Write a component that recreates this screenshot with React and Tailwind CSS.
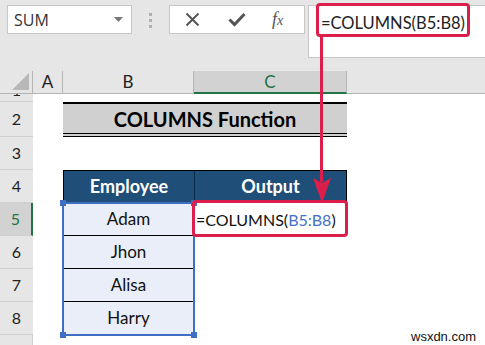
import React from "react";

const rowHead = "flex items-center justify-center bg-[#e6e6e6] border-b border-[#cfcfcf] text-[16px] text-[#222] font-['Lato',sans-serif]";

const Cell = ({ className = "", children }) => (
  <div className={`flex items-center justify-center ${className}`}>{children}</div>
);

export default function App() {
  const names = ["Adam", "Jhon", "Alisa", "Harry"];

  return (
    <div className="relative w-[485px] h-[345px] overflow-hidden bg-white font-['Lato',sans-serif]">
      {/* formula bar */}
      <div className="flex h-[71px] items-start bg-[#e6e6e6] pt-[5px]">
        <div className="ml-[7px] flex h-[29px] w-[125px] items-center justify-between border border-[#c6c6c6] bg-white pl-[6px] pr-[8px]">
          <span className="font-['Open_Sans',sans-serif] text-[16px] text-[#333]">SUM</span>
          <svg width="9" height="5" viewBox="0 0 9 5">
            <polygon points="0,0 9,0 4.5,5" fill="#777" />
          </svg>
        </div>
        <div className="ml-[17px] mt-[8px] flex flex-col gap-[3px]">
          <span className="block h-[3px] w-[3px] bg-[#b0b0b0]" />
          <span className="block h-[3px] w-[3px] bg-[#b0b0b0]" />
          <span className="block h-[3px] w-[3px] bg-[#b0b0b0]" />
        </div>
        <div className="ml-[17px] flex h-[29px] w-[136px] items-center border border-[#c6c6c6] bg-white">
          <svg className="ml-[15px]" width="15" height="15" viewBox="0 0 15 15">
            <path d="M1.5 1.5 L13.5 13.5 M13.5 1.5 L1.5 13.5" stroke="#555" strokeWidth="2" />
          </svg>
          <svg className="ml-[28px]" width="18" height="15" viewBox="0 0 18 15">
            <path d="M1.5 7.5 L6.5 12.5 L16.5 2" stroke="#555" strokeWidth="3" fill="none" />
          </svg>
          <span className="ml-[26px] font-['Liberation_Serif',serif] text-[18px] italic text-[#555]">
            f<span className="text-[14px]">x</span>
          </span>
        </div>
        <div className="ml-[3px] h-[53px] flex-1 border border-[#c6c6c6] border-r-0 bg-white pl-[12px] pt-[5px]">
          <span className="text-[16.5px] text-[#222]">=COLUMNS(B5:B8)</span>
        </div>
      </div>

      {/* sheet */}
      <div className="grid grid-cols-[33px_30px_131px_153px_1fr] grid-rows-[23px_8px_35px_33px_33px_33px_33px_33px_33px_10px]">
        {/* column headers */}
        <div className="relative border-b border-r border-[#b5b5b5] bg-[#e6e6e6]">
          <svg className="absolute bottom-[3px] right-[3px]" width="17" height="17" viewBox="0 0 17 17">
            <polygon points="17,0 17,17 0,17" fill="#b8b8b8" />
          </svg>
        </div>
        <Cell className="border-b border-r border-[#b5b5b5] bg-[#e6e6e6] text-[17px] text-[#222]">A</Cell>
        <Cell className="border-b border-r border-[#b5b5b5] bg-[#e6e6e6] text-[17px] text-[#222]">B</Cell>
        <Cell className="border-b-2 border-b-[#217346] border-r border-r-[#b5b5b5] bg-[#d2d2d2] text-[17px] text-[#217346]">C</Cell>
        <div className="border-b border-[#b5b5b5] bg-[#e6e6e6]" />

        {/* row 1 */}
        <div className="overflow-hidden bg-[#e6e6e6] border-b border-[#cfcfcf] text-center text-[16px] leading-[16px] text-[#222]">
          <div className="-mt-[12px]">1</div>
        </div>
        <div />
        <div />
        <div />
        <div />

        {/* row 2 */}
        <div className={rowHead}>2</div>
        <div />
        <Cell className="col-span-2 border-t-2 border-b-[4px] border-double border-black bg-[#d0d0d0] text-[20px] font-bold text-black">
          COLUMNS Function
        </Cell>
        <div />

        {/* row 3 */}
        <div className={rowHead}>3</div>
        <div />
        <div />
        <div />
        <div />

        {/* row 4 */}
        <div className={rowHead}>4</div>
        <div />
        <Cell className="border border-r-0 border-black bg-[#1f4e78] text-[18px] font-bold text-white">Employee</Cell>
        <Cell className="border border-l-[#0d2a45] border-black bg-[#1f4e78] text-[18px] font-bold text-white">Output</Cell>
        <div />

        {names.map((n, i) => (
          <React.Fragment key={n}>
            {i === 0 ? (
              <div className="flex items-center justify-center border-b border-r-2 border-[#cfcfcf] border-r-[#217346] bg-[#d2d2d2] text-[16px] text-[#217346]">
                5
              </div>
            ) : (
              <div className={rowHead}>{i + 5}</div>
            )}
            <div />
            <Cell className="border-b border-black bg-[#e9eef8] text-[17px] text-[#111]">{n}</Cell>
            {i === 0 ? (
              <div className="flex items-center pl-[2px] text-[16px] text-[#111]">
                =COLUMNS(<span className="text-[#4472c4]">B5:B8</span>)
              </div>
            ) : (
              <div />
            )}
            <div />
          </React.Fragment>
        ))}

        {/* row 9 */}
        <div className="bg-[#e6e6e6] border-r border-[#cfcfcf]" />
        <div />
        <div />
        <div />
        <div />
      </div>

      {/* overlays */}
      <div className="absolute left-[316px] top-[3px] h-[34px] w-[154px] rounded-[4px] border-[3px] border-[#dc1e4b]" />
      <div className="absolute left-[320px] top-[36px] h-[146px] w-[3px] bg-[#dc1e4b]" />
      <svg className="absolute left-[313px] top-[178px]" width="18" height="25" viewBox="0 0 18 25">
        <polygon points="0,0 9,5 18,0 9,25" fill="#dc1e4b" />
      </svg>

      <div className="absolute left-[62px] top-[202px] h-[134px] w-[133px] border-2 border-[#3f6fc2]">
        <span className="absolute -left-[4px] -top-[4px] h-[6px] w-[6px] bg-[#3f6fc2]" />
        <span className="absolute -right-[4px] -top-[4px] h-[6px] w-[6px] bg-[#3f6fc2]" />
        <span className="absolute -left-[4px] -bottom-[4px] h-[6px] w-[6px] bg-[#3f6fc2]" />
        <span className="absolute -right-[4px] -bottom-[4px] h-[6px] w-[6px] bg-[#3f6fc2]" />
      </div>

      <div className="absolute left-[192px] top-[200px] h-[37px] w-[156px] rounded-[4px] border-[3px] border-[#dc1e4b]" />

      <span className="absolute left-[411px] top-[327px] font-['Liberation_Sans',sans-serif] text-[13px] text-[#111]">
        wsxdn.com
      </span>
    </div>
  );
}
